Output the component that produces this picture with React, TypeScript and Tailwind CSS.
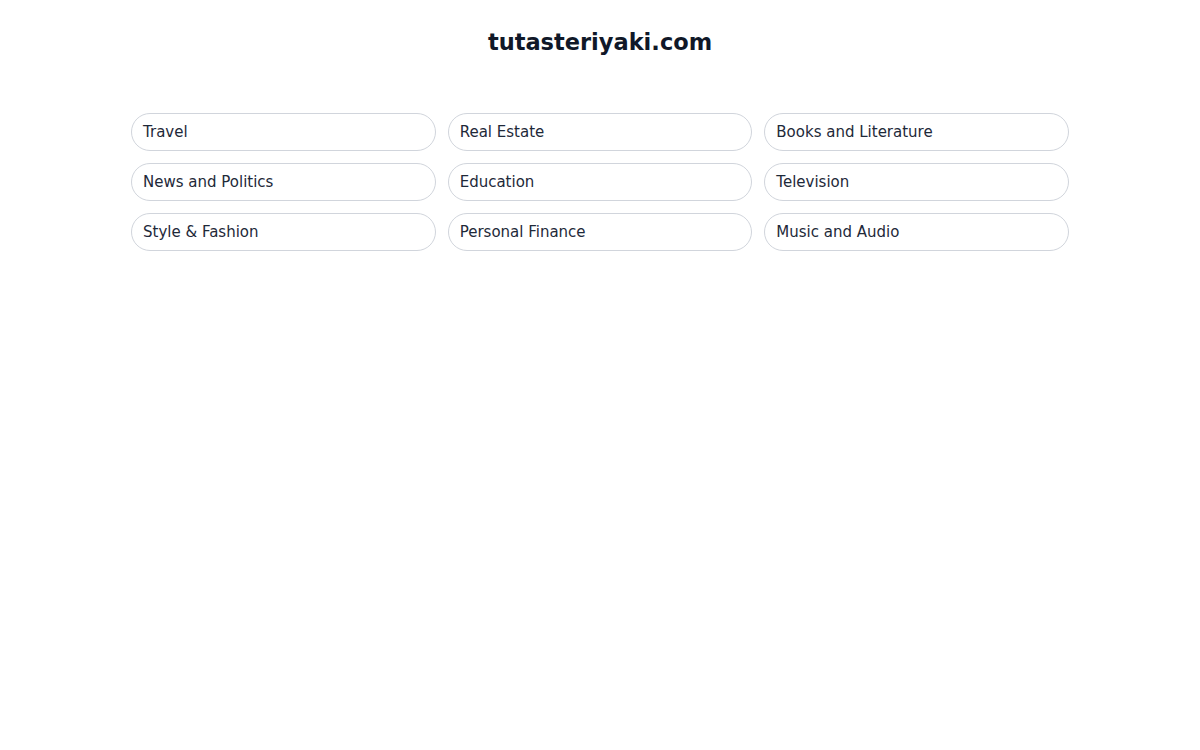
const topics = [
  'Travel',
  'Real Estate',
  'Books and Literature',
  'News and Politics',
  'Education',
  'Television',
  'Style & Fashion',
  'Personal Finance',
  'Music and Audio',
];

export default function App() {
  return (
    <div className="min-h-screen bg-white text-gray-900 font-['DejaVu_Sans',sans-serif]">
      <div className="w-[938px] mx-auto">
        {/* Header */}
        <h1 className="pt-[26px] h-[59px] text-center text-[22.5px] leading-[32px] font-bold text-gray-900">
          tutasteriyaki.com
        </h1>

        {/* Topics */}
        <div className="mt-[54px] grid grid-cols-3 gap-3">
          {topics.map((topic) => (
            <a
              key={topic}
              href="#"
              className="h-[38px] flex items-center px-[11px] rounded-full border border-gray-300 text-[15px] text-gray-800"
            >
              {topic}
            </a>
          ))}
        </div>
      </div>
    </div>
  );
}
